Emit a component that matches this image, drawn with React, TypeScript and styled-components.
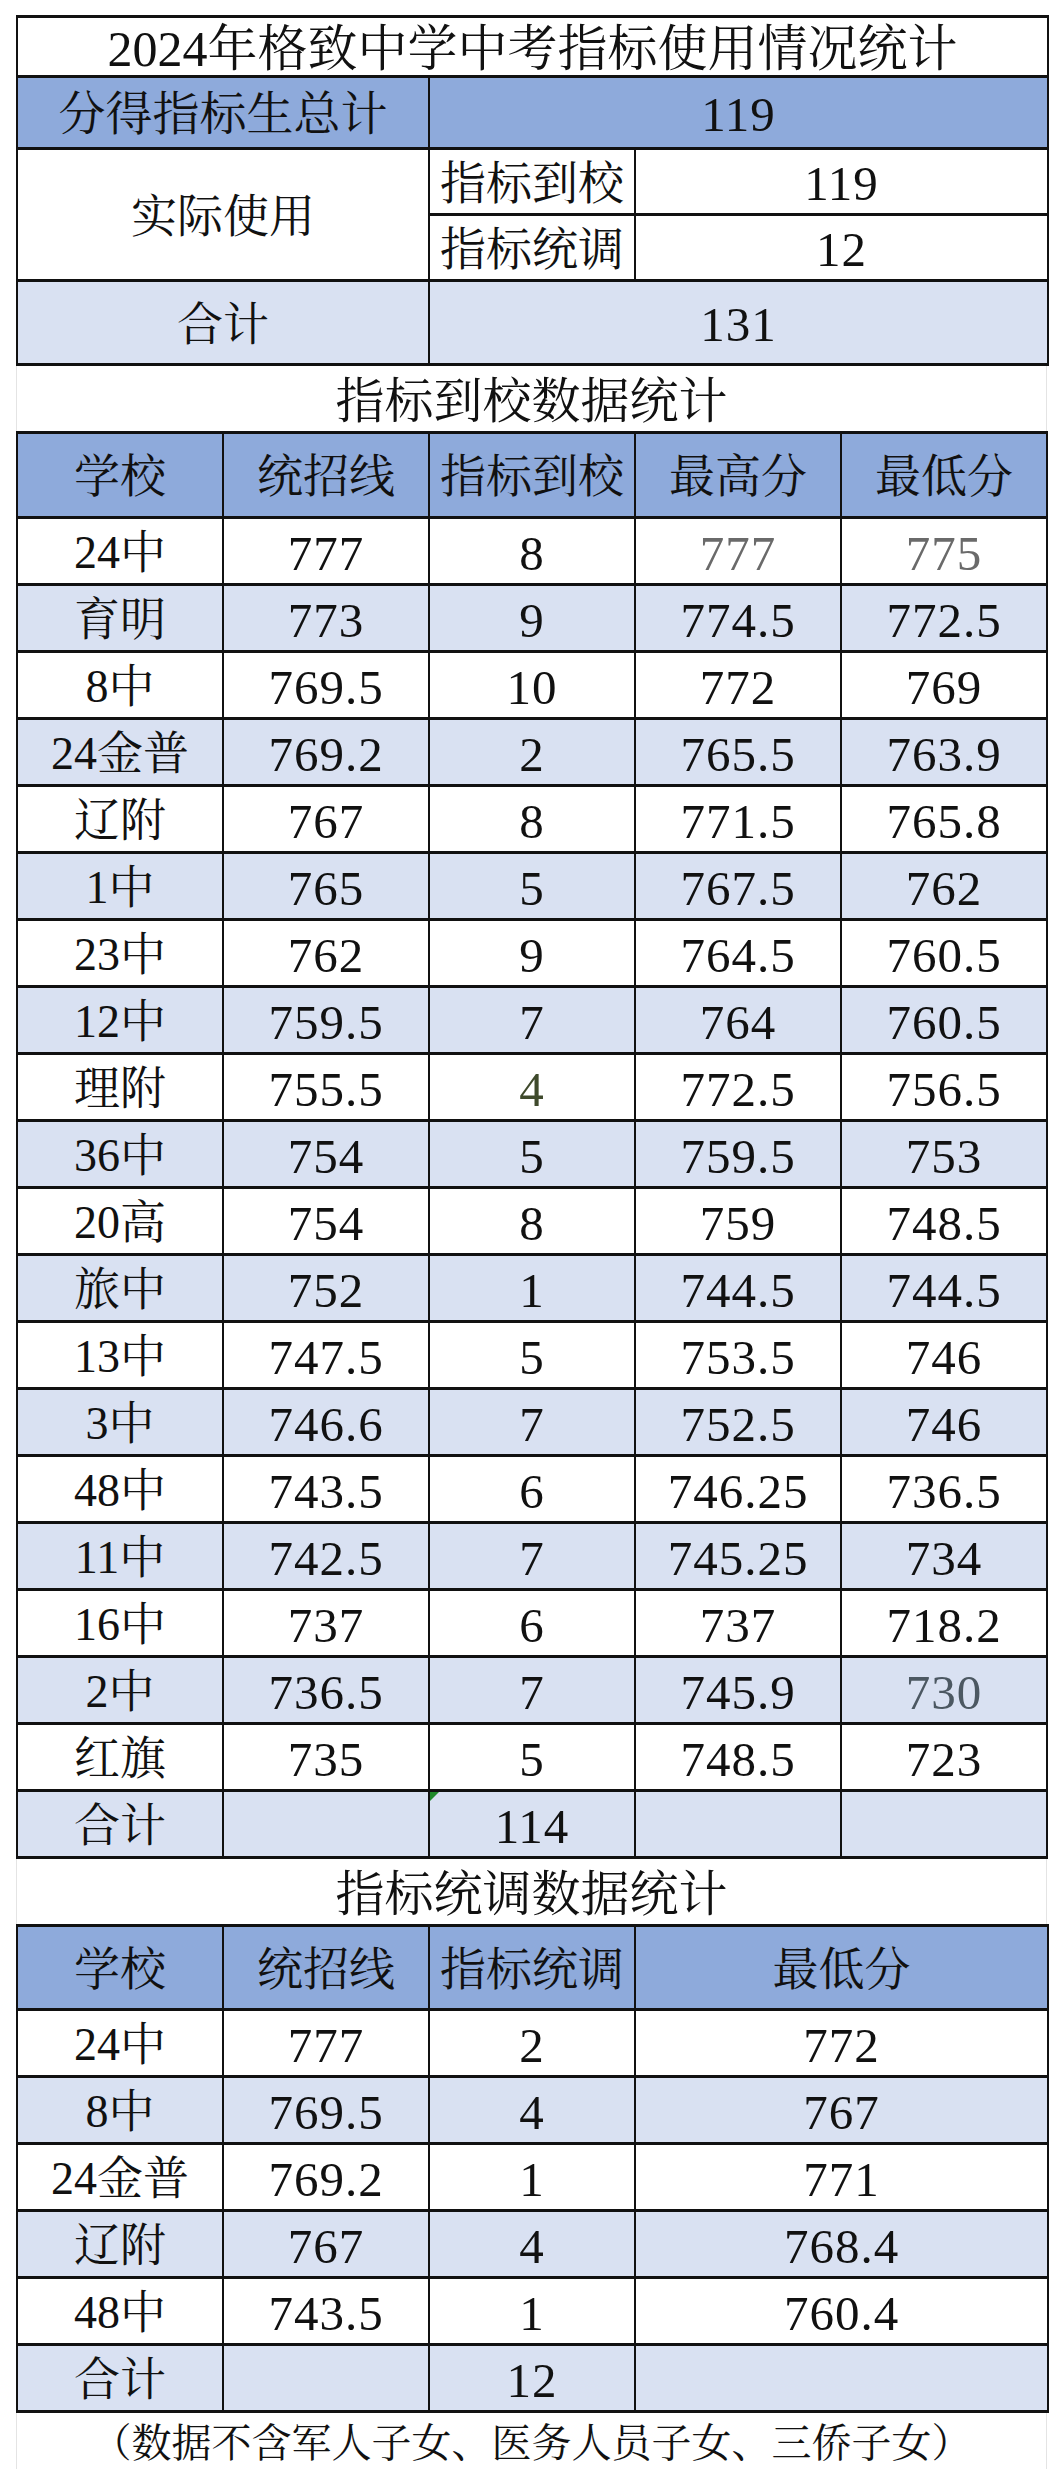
import { createGlobalStyle, styled } from 'styled-components';

const GlobalStyle = createGlobalStyle`
  html, body {
    margin: 0;
    padding: 0;
    background: #fff;
  }
  body {
    font-family: "Liberation Serif", "Noto Serif CJK SC", "Noto Sans CJK SC", serif;
    color: #111;
  }
`;

const BLUE = '#8eaadb';
const LIGHT = '#d9e1f2';

const Sheet = styled.div`
  padding: 15px 0 0 16px;
  width: 1031px;
`;

const Table = styled.table`
  width: 1031px;
  border-collapse: collapse;
  table-layout: fixed;
`;

const Row = styled.tr<{ $bg?: string; $h: number }>`
  height: ${(p) => p.$h}px;
  background: ${(p) => p.$bg ?? '#fff'};
`;

const Cell = styled.td<{ $size?: number; $color?: string; $num?: boolean }>`
  position: relative;
  border-top: 3px solid #111;
  border-bottom: 3px solid #111;
  border-left: 2px solid #111;
  border-right: 2px solid #111;
  padding: 4px 0 0;
  text-align: center;
  vertical-align: middle;
  font-size: ${(p) => p.$size ?? (p.$num ? 49 : 46)}px;
  letter-spacing: ${(p) => (p.$num ? '1px' : '0')};
  line-height: 1;
  color: ${(p) => p.$color ?? '#111'};
  white-space: nowrap;
`;

const Band = styled.div<{ $h: number; $size: number }>`
  height: ${(p) => p.$h}px;
  display: flex;
  align-items: center;
  justify-content: center;
  box-sizing: border-box;
  padding-top: 6px;
  border-left: 1px solid #e4e4e4;
  border-right: 1px solid #e4e4e4;
  font-size: ${(p) => p.$size}px;
  line-height: 1;
  color: #111;
`;

const ErrorMark = styled.span`
  position: absolute;
  top: 0;
  left: 0;
  width: 0;
  height: 0;
  border-top: 9px solid #1f8a2a;
  border-right: 9px solid transparent;
`;

const GRAY = '#6a6a6a';

type Line = { cells: string[]; colors?: (string | undefined)[] };

const arrival: Line[] = [
  { cells: ['24中', '777', '8', '777', '775'], colors: [undefined, undefined, undefined, GRAY, GRAY] },
  { cells: ['育明', '773', '9', '774.5', '772.5'] },
  { cells: ['8中', '769.5', '10', '772', '769'] },
  { cells: ['24金普', '769.2', '2', '765.5', '763.9'] },
  { cells: ['辽附', '767', '8', '771.5', '765.8'] },
  { cells: ['1中', '765', '5', '767.5', '762'] },
  { cells: ['23中', '762', '9', '764.5', '760.5'] },
  { cells: ['12中', '759.5', '7', '764', '760.5'] },
  { cells: ['理附', '755.5', '4', '772.5', '756.5'], colors: [undefined, undefined, '#3f4a2c'] },
  { cells: ['36中', '754', '5', '759.5', '753'] },
  { cells: ['20高', '754', '8', '759', '748.5'] },
  { cells: ['旅中', '752', '1', '744.5', '744.5'] },
  { cells: ['13中', '747.5', '5', '753.5', '746'] },
  { cells: ['3中', '746.6', '7', '752.5', '746'] },
  { cells: ['48中', '743.5', '6', '746.25', '736.5'] },
  { cells: ['11中', '742.5', '7', '745.25', '734'] },
  { cells: ['16中', '737', '6', '737', '718.2'] },
  { cells: ['2中', '736.5', '7', '745.9', '730'], colors: [undefined, undefined, undefined, undefined, '#4c5862'] },
  { cells: ['红旗', '735', '5', '748.5', '723'] },
];

const transfer: Line[] = [
  { cells: ['24中', '777', '2', '772'] },
  { cells: ['8中', '769.5', '4', '767'] },
  { cells: ['24金普', '769.2', '1', '771'] },
  { cells: ['辽附', '767', '4', '768.4'] },
  { cells: ['48中', '743.5', '1', '760.4'] },
];

const stripe = (i: number) => (i % 2 === 1 ? LIGHT : '#fff');
const isNum = (s: string) => /^[\d.]+$/.test(s);

function SummaryTable() {
  return (
    <Table>
      <colgroup>
        <col style={{ width: 412 }} />
        <col style={{ width: 206 }} />
        <col style={{ width: 413 }} />
      </colgroup>
      <tbody>
        <Row $h={60}>
          <Cell colSpan={3} $size={50}>2024年格致中学中考指标使用情况统计</Cell>
        </Row>
        <Row $h={72} $bg={BLUE}>
          <Cell $size={47}>分得指标生总计</Cell>
          <Cell colSpan={2} $num>119</Cell>
        </Row>
        <Row $h={66}>
          <Cell rowSpan={2}>实际使用</Cell>
          <Cell>指标到校</Cell>
          <Cell $num>119</Cell>
        </Row>
        <Row $h={66}>
          <Cell>指标统调</Cell>
          <Cell $num>12</Cell>
        </Row>
        <Row $h={84} $bg={LIGHT}>
          <Cell>合计</Cell>
          <Cell colSpan={2} $num>131</Cell>
        </Row>
      </tbody>
    </Table>
  );
}

function ArrivalTable() {
  return (
    <Table>
      <colgroup>
        {[0, 1, 2, 3, 4].map((i) => (
          <col key={i} style={{ width: 206 }} />
        ))}
      </colgroup>
      <tbody>
        <Row $h={85} $bg={BLUE}>
          {['学校', '统招线', '指标到校', '最高分', '最低分'].map((h) => (
            <Cell key={h}>{h}</Cell>
          ))}
        </Row>
        {arrival.map((line, i) => (
          <Row key={line.cells[0]} $h={67} $bg={stripe(i)}>
            {line.cells.map((c, j) => (
              <Cell key={j} $color={line.colors?.[j]} $num={isNum(c)}>
                {c}
              </Cell>
            ))}
          </Row>
        ))}
        <Row $h={67} $bg={LIGHT}>
          <Cell>合计</Cell>
          <Cell />
          <Cell $num>
            <ErrorMark />
            114
          </Cell>
          <Cell />
          <Cell />
        </Row>
      </tbody>
    </Table>
  );
}

function TransferTable() {
  return (
    <Table>
      <colgroup>
        <col style={{ width: 206 }} />
        <col style={{ width: 206 }} />
        <col style={{ width: 206 }} />
        <col style={{ width: 413 }} />
      </colgroup>
      <tbody>
        <Row $h={84} $bg={BLUE}>
          {['学校', '统招线', '指标统调', '最低分'].map((h) => (
            <Cell key={h}>{h}</Cell>
          ))}
        </Row>
        {transfer.map((line, i) => (
          <Row key={line.cells[0]} $h={67} $bg={stripe(i)}>
            {line.cells.map((c, j) => (
              <Cell key={j} $num={isNum(c)}>{c}</Cell>
            ))}
          </Row>
        ))}
        <Row $h={67} $bg={LIGHT}>
          <Cell>合计</Cell>
          <Cell />
          <Cell $num>12</Cell>
          <Cell />
        </Row>
      </tbody>
    </Table>
  );
}

export default function App() {
  return (
    <>
      <GlobalStyle />
      <Sheet>
        <SummaryTable />
        <Band $h={65} $size={49}>指标到校数据统计</Band>
        <ArrivalTable />
        <Band $h={65} $size={49}>指标统调数据统计</Band>
        <TransferTable />
        <Band $h={56} $size={40}>（数据不含军人子女、医务人员子女、三侨子女）</Band>
      </Sheet>
    </>
  );
}
